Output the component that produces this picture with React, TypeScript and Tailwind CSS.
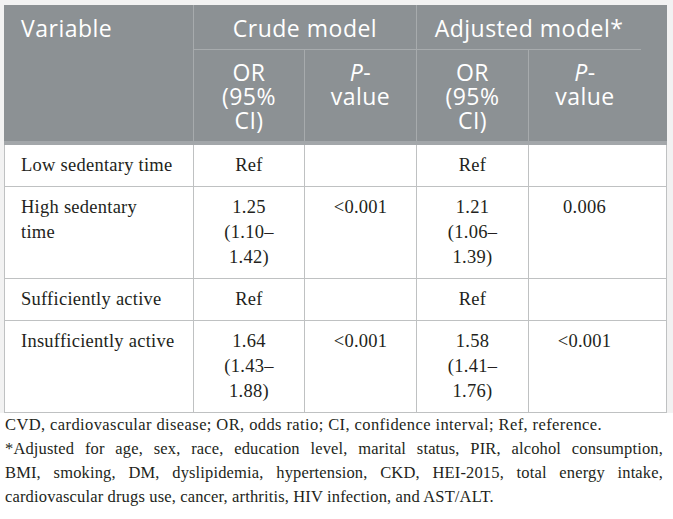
import React from "react";

const serif = "font-['Liberation_Serif','Times_New_Roman',serif]";
const sans = "font-['Open_Sans','Noto_Sans',sans-serif]";

function PV() {
  return (
    <>
      <i>P</i>-<br />value
    </>
  );
}

type Row = { label: React.ReactNode; a: React.ReactNode; b: React.ReactNode; c: React.ReactNode; d: React.ReactNode };

const rows: Row[] = [
  { label: "Low sedentary time", a: "Ref", b: "", c: "Ref", d: "" },
  {
    label: (
      <>
        High sedentary
        <br />
        time
      </>
    ),
    a: (
      <>
        1.25
        <br />
        (1.10–
        <br />
        1.42)
      </>
    ),
    b: "<0.001",
    c: (
      <>
        1.21
        <br />
        (1.06–
        <br />
        1.39)
      </>
    ),
    d: "0.006",
  },
  { label: "Sufficiently active", a: "Ref", b: "", c: "Ref", d: "" },
  {
    label: "Insufficiently active",
    a: (
      <>
        1.64
        <br />
        (1.43–
        <br />
        1.88)
      </>
    ),
    b: "<0.001",
    c: (
      <>
        1.58
        <br />
        (1.41–
        <br />
        1.76)
      </>
    ),
    d: "<0.001",
  },
];

export default function App() {
  const hLine = "border-[#a7abad]";
  return (
    <div className="w-[673px] h-[519px] bg-white overflow-hidden">
      <div className="bg-[#f2f2f2] pl-[4px] pt-[5px] pr-[6px]">
        {/* Header */}
        <div
          className={`grid grid-cols-[190px_111px_112px_112px_137px] bg-[#8c9194] text-white ${sans} text-[23px] leading-[24px] tracking-[0.5px] border-b-[4px] border-[#a3a7aa]`}
        >
          <div className={`row-span-2 border-r ${hLine} pl-[17px] pt-[11px]`}>Variable</div>
          <div className={`col-span-2 border-r border-b ${hLine} h-[45px] pt-[11px] text-center`}>Crude model</div>
          <div className="col-span-2 pr-[25px] h-[45px]">
            <div className={`h-full border-b ${hLine} pt-[11px] text-center whitespace-nowrap`}>Adjusted model*</div>
          </div>
          <div className={`border-r ${hLine} h-[91px] pt-[10px] text-center`}>
            OR
            <br />
            (95%
            <br />
            CI)
          </div>
          <div className={`border-r ${hLine} pt-[10px] text-center`}>
            <PV />
          </div>
          <div className={`border-r ${hLine} pt-[10px] text-center`}>
            OR
            <br />
            (95%
            <br />
            CI)
          </div>
          <div className="pt-[10px] pr-[25px] text-center">
            <PV />
          </div>
        </div>
        {/* Body */}
        <div className={`bg-white border-l border-r border-[#bfc1c2] ${serif} text-[18.5px] leading-[25px] text-[#231f20] tracking-[0.25px]`}>
          {rows.map((r, i) => (
            <div key={i} className="grid grid-cols-[189px_111px_112px_112px_136px] border-b border-[#bfc1c2]">
              <div className="border-r border-[#bfc1c2] pl-[16px] pt-[8px] pb-[8px]">{r.label}</div>
              <div className="border-r border-[#bfc1c2] text-center pt-[8px] pb-[8px]">{r.a}</div>
              <div className="border-r border-[#bfc1c2] text-center pt-[8px] pb-[8px]">{r.b}</div>
              <div className="border-r border-[#bfc1c2] text-center pt-[8px] pb-[8px]">{r.c}</div>
              <div className="text-center pt-[8px] pb-[8px] pr-[25px]">{r.d}</div>
            </div>
          ))}
        </div>
      </div>
      {/* Footnote */}
      <div className={`pl-[5px] w-[663px] ${serif} text-[16.5px] leading-[24px] tracking-[0.15px] text-[#231f20]`}>
        <div className="tracking-[0.4px]">CVD, cardiovascular disease; OR, odds ratio; CI, confidence interval; Ref, reference.</div>
        <div className="text-justify [text-align-last:justify]">
          *Adjusted for age, sex, race, education level, marital status, PIR, alcohol consumption,
        </div>
        <div className="text-justify [text-align-last:justify]">
          BMI, smoking, DM, dyslipidemia, hypertension, CKD, HEI-2015, total energy intake,
        </div>
        <div>cardiovascular drugs use, cancer, arthritis, HIV infection, and AST/ALT.</div>
      </div>
    </div>
  );
}
